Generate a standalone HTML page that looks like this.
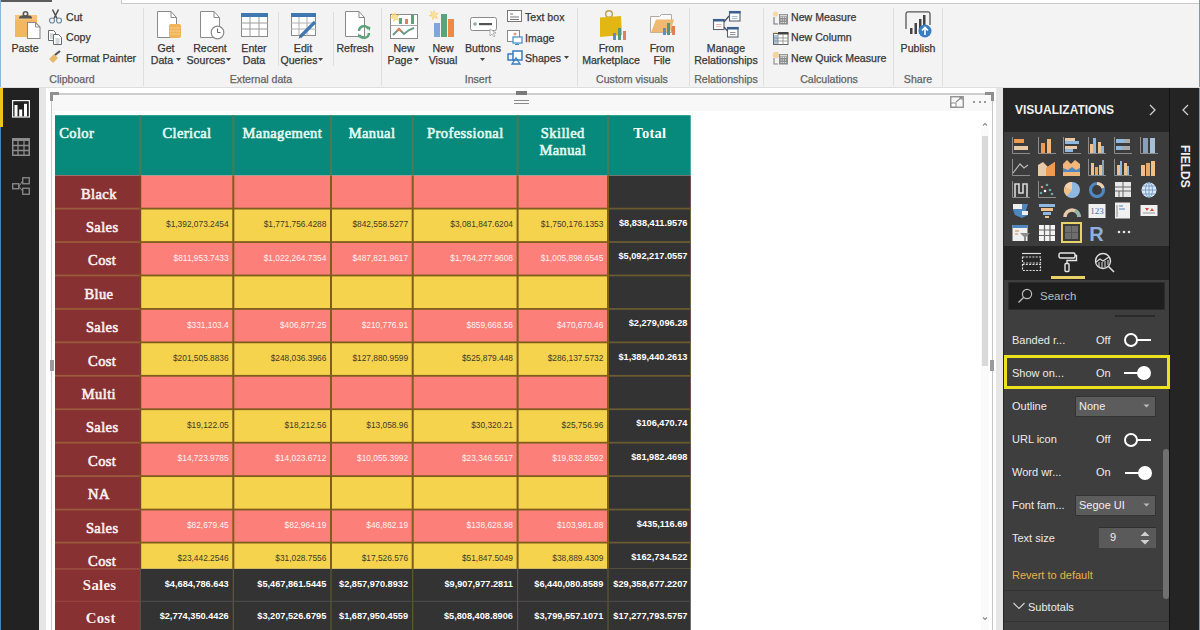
<!DOCTYPE html>
<html><head><meta charset="utf-8"><style>
*{margin:0;padding:0;box-sizing:border-box}
html,body{width:1200px;height:630px;overflow:hidden;background:#f3f3f3;font-family:"Liberation Sans", sans-serif}
.ab{position:absolute;display:block}
.t{position:absolute;white-space:nowrap;line-height:1}
</style></head><body>

<div class="ab" style="left:0px;top:0px;width:52px;height:2px;background:#5c5c5c"></div>
<div class="ab" style="left:121px;top:0px;width:1079px;height:3px;background:#ffffff"></div>
<div class="ab" style="left:121px;top:3px;width:1079px;height:1px;background:#c8c8c8"></div>
<div class="ab" style="left:121px;top:0px;width:1px;height:4px;background:#c8c8c8"></div>
<div class="ab" style="left:0px;top:0px;width:1px;height:88px;background:#86b8dc"></div>
<div class="ab" style="left:1199px;top:0px;width:1px;height:630px;background:#6f9fc2"></div>
<div class="ab" style="left:0px;top:87px;width:1200px;height:1px;background:#dedede"></div>
<div class="ab" style="left:143px;top:8px;width:1px;height:78px;background:#dedede"></div>
<div class="ab" style="left:278px;top:12px;width:1px;height:54px;background:#dedede"></div>
<div class="ab" style="left:333px;top:12px;width:1px;height:54px;background:#dedede"></div>
<div class="ab" style="left:381px;top:8px;width:1px;height:78px;background:#dedede"></div>
<div class="ab" style="left:577px;top:8px;width:1px;height:78px;background:#dedede"></div>
<div class="ab" style="left:689px;top:8px;width:1px;height:78px;background:#dedede"></div>
<div class="ab" style="left:763px;top:8px;width:1px;height:78px;background:#dedede"></div>
<div class="ab" style="left:893px;top:8px;width:1px;height:78px;background:#dedede"></div>
<div class="ab" style="left:942px;top:8px;width:1px;height:78px;background:#dedede"></div>
<svg class="ab" style="left:13px;top:9px" width="30" height="32" viewBox="0 0 30 32"><rect x="2" y="6" width="22" height="22" fill="#f2b860"/><rect x="2" y="6" width="22" height="5" fill="#f5c888" opacity="0.6"/><path d="M6 9.5 Q6 6.5 9 6.5 H16 Q19 6.5 19 9.5 Z" fill="#555"/><circle cx="12.5" cy="5" r="2.2" fill="none" stroke="#555" stroke-width="1.6"/><path d="M14.5 13.5 h8 l4.5 4.5 v11.5 h-12.5 z" fill="#fff" stroke="#8a8a8a" stroke-width="1.1"/><path d="M22.5 13.5 v4.5 h4.5" fill="none" stroke="#8a8a8a" stroke-width="1"/></svg>
<div class="t" style="left:11.45px;top:42.89px;font-family:'Liberation Sans', sans-serif;font-weight:normal;font-size:10.6px;color:#363636;-webkit-text-stroke:0.25px #363636">Paste</div>
<svg class="ab" style="left:48px;top:9px" width="15" height="15" viewBox="0 0 15 15"><path d="M4.5 0.5 L9 9.5 M10.5 0.5 L6 9.5" stroke="#4a4a4a" stroke-width="1.5"/><circle cx="4" cy="11.5" r="2.5" fill="none" stroke="#6f8aa0" stroke-width="1.2"/><circle cx="11" cy="11.5" r="2.5" fill="none" stroke="#6f8aa0" stroke-width="1.2"/></svg>
<div class="t" style="left:66.00px;top:11.89px;font-family:'Liberation Sans', sans-serif;font-weight:normal;font-size:10.6px;color:#363636;-webkit-text-stroke:0.25px #363636">Cut</div>
<svg class="ab" style="left:48px;top:30px" width="16" height="15" viewBox="0 0 16 15"><path d="M0.5 0.5 h5 l2 2 v8 h-7z" fill="#fff" stroke="#6a6a6a" stroke-width="1"/><path d="M2 4h3M2 6h3M2 8h3" stroke="#8a9aaa" stroke-width="0.8"/><path d="M5.5 4.5 h5 l3 3 v7 h-8z" fill="#fff" stroke="#6a6a6a" stroke-width="1"/><path d="M7.5 9h4M7.5 11h4M7.5 13h4" stroke="#8a9aaa" stroke-width="0.8"/></svg>
<div class="t" style="left:66.00px;top:31.89px;font-family:'Liberation Sans', sans-serif;font-weight:normal;font-size:10.6px;color:#363636;-webkit-text-stroke:0.25px #363636">Copy</div>
<svg class="ab" style="left:48px;top:50px" width="15" height="14" viewBox="0 0 15 14"><path d="M1 9 L6 4 L10 8 L5 13 Z" fill="#e8b86a"/><path d="M7 5 L12 1" stroke="#555" stroke-width="2.2"/></svg>
<div class="t" style="left:66.00px;top:52.89px;font-family:'Liberation Sans', sans-serif;font-weight:normal;font-size:10.6px;color:#363636;-webkit-text-stroke:0.25px #363636">Format Painter</div>
<div class="t" style="left:49.31px;top:73.89px;font-family:'Liberation Sans', sans-serif;font-weight:normal;font-size:10.6px;color:#646464;-webkit-text-stroke:0.25px #646464">Clipboard</div>
<svg class="ab" style="left:157px;top:11px" width="20" height="27" viewBox="0 0 20 27"><path d="M0.5 0.5 H14 L19.5 6.5 V26.5 H0.5 Z" fill="#fff" stroke="#8a8a8a" stroke-width="1"/><path d="M14 0.5 V6.5 H19.5" fill="none" stroke="#8a8a8a" stroke-width="1"/></svg>
<svg class="ab" style="left:169px;top:22px" width="13" height="17" viewBox="0 0 13 17"><rect x="0" y="2" width="12" height="14" rx="2" fill="#f0b35a"/><path d="M1 6h10M1 9h10M1 12h10" stroke="#f7d39a" stroke-width="0.8"/></svg>
<div class="t" style="left:157.46px;top:42.89px;font-family:'Liberation Sans', sans-serif;font-weight:normal;font-size:10.6px;color:#363636;-webkit-text-stroke:0.25px #363636">Get</div>
<div class="t" style="left:150.80px;top:54.89px;font-family:'Liberation Sans', sans-serif;font-weight:normal;font-size:10.6px;color:#363636;-webkit-text-stroke:0.25px #363636">Data</div>
<svg class="ab" style="left:176px;top:58px" width="6" height="4" viewBox="0 0 6 4"><path d="M0 0h5l-2.5 3z" fill="#444"/></svg>
<svg class="ab" style="left:200px;top:11px" width="20" height="27" viewBox="0 0 20 27"><path d="M0.5 0.5 H14 L19.5 6.5 V26.5 H0.5 Z" fill="#fff" stroke="#8a8a8a" stroke-width="1"/><path d="M14 0.5 V6.5 H19.5" fill="none" stroke="#8a8a8a" stroke-width="1"/></svg>
<svg class="ab" style="left:210px;top:25px" width="15" height="15" viewBox="0 0 15 15"><circle cx="7.5" cy="7.5" r="6.3" fill="#fff" stroke="#8a8a8a" stroke-width="1.2"/><path d="M7.5 3.5V7.5H10.5" fill="none" stroke="#666" stroke-width="1"/></svg>
<div class="t" style="left:193.21px;top:42.89px;font-family:'Liberation Sans', sans-serif;font-weight:normal;font-size:10.6px;color:#363636;-webkit-text-stroke:0.25px #363636">Recent</div>
<div class="t" style="left:186.56px;top:54.89px;font-family:'Liberation Sans', sans-serif;font-weight:normal;font-size:10.6px;color:#363636;-webkit-text-stroke:0.25px #363636">Sources</div>
<svg class="ab" style="left:226px;top:58px" width="6" height="4" viewBox="0 0 6 4"><path d="M0 0h5l-2.5 3z" fill="#444"/></svg>
<svg class="ab" style="left:241px;top:13px" width="27" height="24" viewBox="0 0 27 24"><rect x="0.5" y="0.5" width="26" height="23" fill="#fff" stroke="#8a8a8a"/><rect x="0" y="0" width="27" height="4" fill="#3f78b0"/><path d="M0 10h27M0 16h27M9 4v20M18 4v20" stroke="#9a9a9a" stroke-width="1"/></svg>
<div class="t" style="left:241.33px;top:42.89px;font-family:'Liberation Sans', sans-serif;font-weight:normal;font-size:10.6px;color:#363636;-webkit-text-stroke:0.25px #363636">Enter</div>
<div class="t" style="left:242.80px;top:54.89px;font-family:'Liberation Sans', sans-serif;font-weight:normal;font-size:10.6px;color:#363636;-webkit-text-stroke:0.25px #363636">Data</div>
<svg class="ab" style="left:291px;top:13px" width="27" height="26" viewBox="0 0 27 26"><rect x="0.5" y="0.5" width="24" height="22" fill="#fff" stroke="#8a8a8a"/><rect x="0" y="0" width="25" height="4" fill="#3f78b0"/><path d="M0 10h25M0 16h25M8 4v19M16 4v19" stroke="#b0b0b0" stroke-width="1"/><path d="M9 24 L24 9" stroke="#3f78b0" stroke-width="3.2"/><path d="M8 25.5 L10 22" stroke="#555" stroke-width="1"/></svg>
<div class="t" style="left:293.87px;top:42.89px;font-family:'Liberation Sans', sans-serif;font-weight:normal;font-size:10.6px;color:#363636;-webkit-text-stroke:0.25px #363636">Edit</div>
<div class="t" style="left:280.44px;top:54.89px;font-family:'Liberation Sans', sans-serif;font-weight:normal;font-size:10.6px;color:#363636;-webkit-text-stroke:0.25px #363636">Queries</div>
<svg class="ab" style="left:318px;top:58px" width="6" height="4" viewBox="0 0 6 4"><path d="M0 0h5l-2.5 3z" fill="#444"/></svg>
<svg class="ab" style="left:345px;top:11px" width="20" height="26" viewBox="0 0 20 26"><path d="M0.5 0.5 H14 L19.5 6.5 V25.5 H0.5 Z" fill="#fff" stroke="#8a8a8a" stroke-width="1"/><path d="M14 0.5 V6.5 H19.5" fill="none" stroke="#8a8a8a" stroke-width="1"/></svg>
<svg class="ab" style="left:356px;top:24px" width="16" height="16" viewBox="0 0 16 16"><path d="M3 7 A5 5 0 0 1 12.5 5" fill="none" stroke="#5aa37a" stroke-width="2.4"/><path d="M13 9 A5 5 0 0 1 3.5 11" fill="none" stroke="#5aa37a" stroke-width="2.4"/><path d="M10.5 2l4 1-1 4z M5.5 14l-4-1 1-4z" fill="#5aa37a"/></svg>
<div class="t" style="left:336.44px;top:42.89px;font-family:'Liberation Sans', sans-serif;font-weight:normal;font-size:10.6px;color:#363636;-webkit-text-stroke:0.25px #363636">Refresh</div>
<div class="t" style="left:229.77px;top:73.89px;font-family:'Liberation Sans', sans-serif;font-weight:normal;font-size:10.6px;color:#646464;-webkit-text-stroke:0.25px #646464">External data</div>
<svg class="ab" style="left:389px;top:11px" width="30" height="28" viewBox="0 0 30 28"><rect x="1.5" y="3.5" width="27" height="24" fill="#fff" stroke="#8a8a8a"/><path d="M1.5 14.5h27" stroke="#aaa"/><rect x="10" y="7" width="3" height="6" fill="#5aa37a"/><rect x="16" y="8" width="3" height="5" fill="#e0805a"/><rect x="22" y="4" width="3" height="9" fill="#5aa37a"/><path d="M4 24 L10 18 L15 23 L20 19 L25 17" fill="none" stroke="#6a9a8a" stroke-width="2"/><path d="M8 20 L10 18 L12 20" stroke="#e0805a" stroke-width="2" fill="none"/><g transform="translate(6,6)"><path d="M0 -5.5 L1.2 -1.5 L5 -2.5 L2 0.5 L4.5 4 L0.5 2.5 L-1.5 5.5 L-1.8 1.5 L-5.5 1 L-2.5 -1 L-4 -4.5 L-0.8 -2z" fill="#f6cf6a"/><circle r="2.6" fill="#fbe09a"/></g></svg>
<div class="t" style="left:393.40px;top:42.89px;font-family:'Liberation Sans', sans-serif;font-weight:normal;font-size:10.6px;color:#363636;-webkit-text-stroke:0.25px #363636">New</div>
<div class="t" style="left:387.62px;top:54.89px;font-family:'Liberation Sans', sans-serif;font-weight:normal;font-size:10.6px;color:#363636;-webkit-text-stroke:0.25px #363636">Page</div>
<svg class="ab" style="left:414px;top:58px" width="6" height="4" viewBox="0 0 6 4"><path d="M0 0h5l-2.5 3z" fill="#444"/></svg>
<svg class="ab" style="left:428px;top:9px" width="28" height="29" viewBox="0 0 28 29"><g transform="translate(6,6)"><path d="M0 -5.5 L1.2 -1.5 L5 -2.5 L2 0.5 L4.5 4 L0.5 2.5 L-1.5 5.5 L-1.8 1.5 L-5.5 1 L-2.5 -1 L-4 -4.5 L-0.8 -2z" fill="#f6cf6a"/><circle r="2.6" fill="#fbe09a"/></g><rect x="6" y="14" width="6" height="14" fill="#7da7d9"/><rect x="13" y="5" width="6" height="23" fill="#5aa37a"/><rect x="20" y="10" width="6" height="18" fill="#ef8a45"/></svg>
<div class="t" style="left:432.40px;top:42.89px;font-family:'Liberation Sans', sans-serif;font-weight:normal;font-size:10.6px;color:#363636;-webkit-text-stroke:0.25px #363636">New</div>
<div class="t" style="left:428.66px;top:54.89px;font-family:'Liberation Sans', sans-serif;font-weight:normal;font-size:10.6px;color:#363636;-webkit-text-stroke:0.25px #363636">Visual</div>
<svg class="ab" style="left:470px;top:17px" width="29" height="20" viewBox="0 0 29 20"><rect x="0.5" y="0.5" width="26" height="13" rx="2" fill="#fff" stroke="#8a8a8a"/><circle cx="5" cy="7" r="1.8" fill="#8aa"/><rect x="9" y="6" width="13" height="2.2" fill="#555"/><path d="M20 12 l0 7 l2-2 l2 3 l1-1 l-2-3 h3z" fill="#fff" stroke="#999" stroke-width="0.7"/></svg>
<div class="t" style="left:465.03px;top:42.89px;font-family:'Liberation Sans', sans-serif;font-weight:normal;font-size:10.6px;color:#363636;-webkit-text-stroke:0.25px #363636">Buttons</div>
<svg class="ab" style="left:480px;top:58px" width="6" height="4" viewBox="0 0 6 4"><path d="M0 0h5l-2.5 3z" fill="#444"/></svg>
<svg class="ab" style="left:507px;top:10px" width="16" height="13" viewBox="0 0 16 13"><rect x="0.5" y="0.5" width="14" height="11" fill="#fff" stroke="#777"/><path d="M3 4h3M3 7h9M3 9.5h9" stroke="#777" stroke-width="1"/></svg>
<div class="t" style="left:525.00px;top:11.89px;font-family:'Liberation Sans', sans-serif;font-weight:normal;font-size:10.6px;color:#363636;-webkit-text-stroke:0.25px #363636">Text box</div>
<svg class="ab" style="left:507px;top:30px" width="16" height="15" viewBox="0 0 16 15"><rect x="0.5" y="0.5" width="12" height="11" fill="#fff" stroke="#8a8a8a"/><circle cx="8" cy="4" r="1.5" fill="#e59a7a"/><rect x="6" y="7" width="9" height="6" fill="#fff" stroke="#3a8fc0" stroke-width="1.2"/><path d="M10 13v2M8 14.5h4" stroke="#3a8fc0"/></svg>
<div class="t" style="left:525.00px;top:32.89px;font-family:'Liberation Sans', sans-serif;font-weight:normal;font-size:10.6px;color:#363636;-webkit-text-stroke:0.25px #363636">Image</div>
<svg class="ab" style="left:507px;top:50px" width="16" height="15" viewBox="0 0 16 15"><path d="M1 4 h6 v6 h-6z" fill="none" stroke="#3a7ec0" stroke-width="1.5"/><path d="M6 1 h9 v9 h-9z" fill="#fff" stroke="#3a7ec0" stroke-width="1.5"/><path d="M5 14 L9 8 L13 14z" fill="none" stroke="#3a7ec0" stroke-width="1.3"/></svg>
<div class="t" style="left:525.00px;top:52.89px;font-family:'Liberation Sans', sans-serif;font-weight:normal;font-size:10.6px;color:#363636;-webkit-text-stroke:0.25px #363636">Shapes</div>
<svg class="ab" style="left:564px;top:56px" width="6" height="4" viewBox="0 0 6 4"><path d="M0 0h5l-2.5 3z" fill="#444"/></svg>
<div class="t" style="left:464.74px;top:73.89px;font-family:'Liberation Sans', sans-serif;font-weight:normal;font-size:10.6px;color:#646464;-webkit-text-stroke:0.25px #646464">Insert</div>
<svg class="ab" style="left:598px;top:9px" width="30" height="31" viewBox="0 0 30 31"><circle cx="11" cy="5" r="3.3" fill="none" stroke="#b8a050" stroke-width="1.4"/><path d="M2 8.5 L23 7 L24 26 L2 28z" fill="#e3b713"/><rect x="15" y="24" width="3" height="7" fill="#5a8fc0"/><rect x="20" y="19" width="3" height="12" fill="#4f9a7a"/><rect x="25" y="22" width="3" height="9" fill="#e0805a"/></svg>
<div class="t" style="left:598.64px;top:42.89px;font-family:'Liberation Sans', sans-serif;font-weight:normal;font-size:10.6px;color:#363636;-webkit-text-stroke:0.25px #363636">From</div>
<div class="t" style="left:582.13px;top:54.89px;font-family:'Liberation Sans', sans-serif;font-weight:normal;font-size:10.6px;color:#363636;-webkit-text-stroke:0.25px #363636">Marketplace</div>
<svg class="ab" style="left:649px;top:13px" width="28" height="23" viewBox="0 0 28 23"><path d="M1.5 3.5 h9 l2 -2 h10 v18 h-21z" fill="#fbfbfb" stroke="#b0a8a0" stroke-width="1"/><path d="M2 19.5 L7 6.5 H25 L21 19.5z" fill="#f0b870"/><rect x="14" y="15" width="3" height="7" fill="#5a8fc0"/><rect x="18" y="10" width="3" height="12" fill="#4f9a7a"/><rect x="23" y="13" width="3" height="9" fill="#e0805a"/></svg>
<div class="t" style="left:649.64px;top:42.89px;font-family:'Liberation Sans', sans-serif;font-weight:normal;font-size:10.6px;color:#363636;-webkit-text-stroke:0.25px #363636">From</div>
<div class="t" style="left:653.46px;top:54.89px;font-family:'Liberation Sans', sans-serif;font-weight:normal;font-size:10.6px;color:#363636;-webkit-text-stroke:0.25px #363636">File</div>
<div class="t" style="left:596.07px;top:73.89px;font-family:'Liberation Sans', sans-serif;font-weight:normal;font-size:10.6px;color:#646464;-webkit-text-stroke:0.25px #646464">Custom visuals</div>
<svg class="ab" style="left:712px;top:10px" width="30" height="29" viewBox="0 0 30 29"><rect x="1.5" y="9.5" width="10.5" height="10" fill="#fff" stroke="#5a6270" stroke-width="1.1"/><rect x="1" y="9" width="11.5" height="2.5" fill="#3d5f8f"/><path d="M4 14.5h5.5M4 16.5h5.5" stroke="#d9a090" stroke-width="0.8"/><rect x="17.5" y="1.5" width="10.5" height="9.5" fill="#fff" stroke="#5a6270" stroke-width="1.1"/><rect x="17" y="1" width="11.5" height="2.5" fill="#3d5f8f"/><path d="M20 6.5h5.5M20 8.5h5.5" stroke="#8aa8c8" stroke-width="0.8"/><rect x="15.5" y="17.5" width="10.5" height="9.5" fill="#fff" stroke="#5a6270" stroke-width="1.1"/><rect x="15" y="17" width="11.5" height="2.5" fill="#3d5f8f"/><path d="M18 22.5h5.5M18 24.5h5.5" stroke="#777" stroke-width="0.8"/><path d="M12 12 L17 6 M12 17 L15.5 21" stroke="#4a5260" stroke-width="1.3"/></svg>
<div class="t" style="left:706.85px;top:42.89px;font-family:'Liberation Sans', sans-serif;font-weight:normal;font-size:10.6px;color:#363636;-webkit-text-stroke:0.25px #363636">Manage</div>
<div class="t" style="left:694.18px;top:54.89px;font-family:'Liberation Sans', sans-serif;font-weight:normal;font-size:10.6px;color:#363636;-webkit-text-stroke:0.25px #363636">Relationships</div>
<div class="t" style="left:694.18px;top:73.89px;font-family:'Liberation Sans', sans-serif;font-weight:normal;font-size:10.6px;color:#646464;-webkit-text-stroke:0.25px #646464">Relationships</div>
<svg class="ab" style="left:772px;top:11px" width="18" height="14" viewBox="0 0 18 14"><circle cx="3.5" cy="3" r="2.6" fill="#f5d9a8"/><path d="M2 6v7h4" fill="none" stroke="#777" stroke-width="1.1"/><rect x="7" y="3" width="9" height="10.5" fill="#8c8c8c"/><path d="M8.5 6.5h6M8.5 9h6M8.5 11.5h6" stroke="#e8e8e8" stroke-width="1" stroke-dasharray="1.3 0.9"/><rect x="8" y="3.8" width="7" height="1.6" fill="#d8d8d8"/></svg>
<div class="t" style="left:791.00px;top:11.89px;font-family:'Liberation Sans', sans-serif;font-weight:normal;font-size:10.6px;color:#363636;-webkit-text-stroke:0.25px #363636">New Measure</div>
<svg class="ab" style="left:772px;top:31px" width="18" height="14" viewBox="0 0 18 14"><circle cx="3.5" cy="3" r="2.6" fill="#f5d9a8"/><rect x="1.5" y="2.5" width="14.5" height="11" fill="#fff" stroke="#666" stroke-width="1"/><rect x="6" y="1" width="10.5" height="2.5" fill="#444"/><rect x="2" y="4" width="4" height="9" fill="#a9c9e3"/><path d="M1.5 7h14.5M1.5 10h14.5M6 3v10.5M11 3v10.5" stroke="#888" stroke-width="0.8"/></svg>
<div class="t" style="left:791.00px;top:31.89px;font-family:'Liberation Sans', sans-serif;font-weight:normal;font-size:10.6px;color:#363636;-webkit-text-stroke:0.25px #363636">New Column</div>
<svg class="ab" style="left:772px;top:51px" width="18" height="14" viewBox="0 0 18 14"><circle cx="4" cy="4" r="3.2" fill="#f3d3a0"/><path d="M2 7v6h4" fill="none" stroke="#888" stroke-width="1.1"/><rect x="7" y="3" width="9" height="10.5" fill="#8c8c8c"/><path d="M8.5 6.5h6M8.5 9h6M8.5 11.5h6" stroke="#e8e8e8" stroke-width="1" stroke-dasharray="1.3 0.9"/><rect x="8" y="3.8" width="7" height="1.6" fill="#d8d8d8"/></svg>
<div class="t" style="left:791.00px;top:52.89px;font-family:'Liberation Sans', sans-serif;font-weight:normal;font-size:10.6px;color:#363636;-webkit-text-stroke:0.25px #363636">New Quick Measure</div>
<div class="t" style="left:800.13px;top:73.89px;font-family:'Liberation Sans', sans-serif;font-weight:normal;font-size:10.6px;color:#646464;-webkit-text-stroke:0.25px #646464">Calculations</div>
<svg class="ab" style="left:902px;top:11px" width="32" height="29" viewBox="0 0 32 29"><path d="M4 18 V2.5 A2 2 0 0 1 6 0.8 H26 A2 2 0 0 1 28 2.5 V14" fill="none" stroke="#555" stroke-width="1.3"/><rect x="8" y="17" width="2.5" height="6" fill="#444"/><rect x="12.5" y="12" width="2.5" height="11" fill="#444"/><rect x="17" y="8" width="2.5" height="15" fill="#444"/><rect x="21" y="4" width="2.5" height="12" fill="#444"/><circle cx="23" cy="20" r="6.5" fill="#3a7ec0"/><path d="M23 24V16.5M20 19.5L23 16.5L26 19.5" fill="none" stroke="#fff" stroke-width="1.6"/></svg>
<div class="t" style="left:900.62px;top:42.89px;font-family:'Liberation Sans', sans-serif;font-weight:normal;font-size:10.6px;color:#363636;-webkit-text-stroke:0.25px #363636">Publish</div>
<div class="t" style="left:903.86px;top:73.89px;font-family:'Liberation Sans', sans-serif;font-weight:normal;font-size:10.6px;color:#646464;-webkit-text-stroke:0.25px #646464">Share</div>
<div class="ab" style="left:0px;top:88px;width:39px;height:542px;background:#222222"></div>
<div class="ab" style="left:0px;top:88px;width:3px;height:39px;background:#e9c71a"></div>
<div class="ab" style="left:0px;top:127px;width:1px;height:503px;background:#3f86b8"></div>
<svg class="ab" style="left:12px;top:100px" width="18" height="18" viewBox="0 0 18 18"><rect x="0.6" y="0.6" width="16.8" height="16.4" fill="none" stroke="#f4f4f4" stroke-width="1.2"/><rect x="2.5" y="5" width="3" height="11.5" fill="#fff"/><rect x="7.2" y="9.5" width="3" height="7" fill="#fff"/><rect x="12" y="3.8" width="3" height="12.7" fill="#fff"/></svg>
<svg class="ab" style="left:12px;top:138px" width="18" height="18" viewBox="0 0 18 18"><rect x="0.75" y="0.75" width="16.5" height="16.5" fill="none" stroke="#8c8c8c" stroke-width="1.5"/><rect x="0" y="0" width="18" height="3" fill="#8c8c8c"/><path d="M0 7.5h18M0 12.5h18M6 3v15M12 3v15" stroke="#8c8c8c" stroke-width="1.3"/></svg>
<svg class="ab" style="left:12px;top:177px" width="18" height="18" viewBox="0 0 18 18"><rect x="0.75" y="6.75" width="6" height="5" fill="none" stroke="#8c8c8c" stroke-width="1.3"/><rect x="10.75" y="0.75" width="6.5" height="6" fill="none" stroke="#8c8c8c" stroke-width="1.3"/><rect x="10.75" y="11.25" width="6.5" height="6" fill="none" stroke="#8c8c8c" stroke-width="1.3"/><path d="M7 9.5 L10.5 4 M7 9.5 L10.5 14" stroke="#8c8c8c" stroke-width="1"/></svg>
<div class="ab" style="left:39px;top:88px;width:964px;height:542px;background:#e6e6e6"></div>
<div class="ab" style="left:46px;top:88px;width:950px;height:542px;background:#ffffff"></div>
<div class="ab" style="left:52px;top:95px;width:940px;height:16px;background:#f8f8f8"></div>
<div class="ab" style="left:51px;top:93px;width:942px;height:2px;background:#cdcdcd"></div>
<div class="ab" style="left:51px;top:93px;width:1px;height:537px;background:#c6c6c6"></div>
<div class="ab" style="left:992px;top:93px;width:1px;height:537px;background:#c6c6c6"></div>
<div class="ab" style="left:50px;top:92px;width:9px;height:3px;background:#8f8f8f"></div>
<div class="ab" style="left:50px;top:92px;width:3px;height:9px;background:#8f8f8f"></div>
<div class="ab" style="left:985px;top:92px;width:9px;height:3px;background:#8f8f8f"></div>
<div class="ab" style="left:991px;top:92px;width:3px;height:9px;background:#8f8f8f"></div>
<div class="ab" style="left:50px;top:360px;width:4px;height:11px;background:#9a9a9a"></div>
<div class="ab" style="left:990px;top:360px;width:4px;height:11px;background:#9a9a9a"></div>
<div class="ab" style="left:516px;top:91px;width:11px;height:4px;background:#7a7a7a"></div>
<div class="ab" style="left:514px;top:100px;width:15px;height:1px;background:#8a8a8a"></div>
<div class="ab" style="left:514px;top:103px;width:15px;height:1px;background:#8a8a8a"></div>
<svg class="ab" style="left:950px;top:96px" width="14" height="12" viewBox="0 0 14 12"><rect x="0.75" y="0.75" width="12.5" height="10.5" fill="none" stroke="#8a8a8a" stroke-width="1.3"/><rect x="1" y="7" width="5" height="4" fill="#fff" stroke="#8a8a8a" stroke-width="1"/><path d="M6 6 L12 1 M9 1h3v3" fill="none" stroke="#8a8a8a" stroke-width="1.2"/></svg>
<div class="ab" style="left:973px;top:101px;width:2px;height:2px;background:#7a7a7a;border-radius:1px"></div>
<div class="ab" style="left:979px;top:101px;width:2px;height:2px;background:#7a7a7a;border-radius:1px"></div>
<div class="ab" style="left:984px;top:101px;width:2px;height:2px;background:#7a7a7a;border-radius:1px"></div>
<div class="ab" style="left:981px;top:128px;width:8px;height:502px;background:#fafafa"></div>
<svg class="ab" style="left:981px;top:121px" width="8" height="6" viewBox="0 0 8 6"><path d="M2 4.5 L4 2.5 L6 4.5" fill="none" stroke="#8a8a8a" stroke-width="1.1"/></svg>
<div class="ab" style="left:982px;top:136px;width:6px;height:230px;background:#d9d9d9"></div>
<svg class="ab" style="left:981px;top:616px" width="8" height="6" viewBox="0 0 8 6"><path d="M2 1.5 L4 3.5 L6 1.5" fill="none" stroke="#8a8a8a" stroke-width="1.1"/></svg>
<svg class="ab" style="left:55px;top:115px" width="636" height="515" viewBox="0 0 636 515"><rect x="0.00" y="0.20" width="635.70" height="60.40" fill="#078a7b"/><rect x="84.20" y="0.20" width="2.00" height="60.40" fill="#4a7a5a"/><rect x="177.30" y="0.20" width="2.00" height="60.40" fill="#4a7a5a"/><rect x="275.00" y="0.20" width="2.00" height="60.40" fill="#4a7a5a"/><rect x="356.70" y="0.20" width="2.00" height="60.40" fill="#4a7a5a"/><rect x="461.60" y="0.20" width="2.00" height="60.40" fill="#4a7a5a"/><rect x="552.00" y="0.20" width="2.00" height="60.40" fill="#4a7a5a"/><rect x="0.00" y="60.60" width="635.70" height="33.00" fill="#fd7f79"/><rect x="0.00" y="93.60" width="635.70" height="33.44" fill="#f6d34c"/><rect x="0.00" y="127.04" width="635.70" height="33.44" fill="#fd7f79"/><rect x="0.00" y="160.48" width="635.70" height="33.44" fill="#f6d34c"/><rect x="0.00" y="193.92" width="635.70" height="33.44" fill="#fd7f79"/><rect x="0.00" y="227.36" width="635.70" height="33.44" fill="#f6d34c"/><rect x="0.00" y="260.80" width="635.70" height="33.44" fill="#fd7f79"/><rect x="0.00" y="294.24" width="635.70" height="33.44" fill="#f6d34c"/><rect x="0.00" y="327.68" width="635.70" height="33.44" fill="#fd7f79"/><rect x="0.00" y="361.12" width="635.70" height="33.44" fill="#f6d34c"/><rect x="0.00" y="394.56" width="635.70" height="33.04" fill="#fd7f79"/><rect x="0.00" y="427.60" width="635.70" height="26.20" fill="#f6d34c"/><rect x="0.00" y="60.60" width="85.20" height="393.20" fill="#873133"/><rect x="553.00" y="60.60" width="82.70" height="393.20" fill="#333333"/><rect x="177.30" y="60.60" width="2.00" height="393.20" fill="#7f5d1d"/><rect x="275.00" y="60.60" width="2.00" height="393.20" fill="#7f5d1d"/><rect x="356.70" y="60.60" width="2.00" height="393.20" fill="#7f5d1d"/><rect x="461.60" y="60.60" width="2.00" height="393.20" fill="#7f5d1d"/><rect x="552.00" y="60.60" width="2.00" height="393.20" fill="#7f5d1d"/><rect x="84.20" y="60.60" width="2.00" height="393.20" fill="#7a4422"/><rect x="0.00" y="92.70" width="84.20" height="1.80" fill="#9b5a3c"/><rect x="84.20" y="92.70" width="469.80" height="1.80" fill="#7f5d1d"/><rect x="554.00" y="92.70" width="81.70" height="1.80" fill="#6a5a30"/><rect x="0.00" y="126.14" width="84.20" height="1.80" fill="#9b5a3c"/><rect x="84.20" y="126.14" width="469.80" height="1.80" fill="#7f5d1d"/><rect x="554.00" y="126.14" width="81.70" height="1.80" fill="#6a5a30"/><rect x="0.00" y="159.58" width="84.20" height="1.80" fill="#9b5a3c"/><rect x="84.20" y="159.58" width="469.80" height="1.80" fill="#7f5d1d"/><rect x="554.00" y="159.58" width="81.70" height="1.80" fill="#6a5a30"/><rect x="0.00" y="193.02" width="84.20" height="1.80" fill="#9b5a3c"/><rect x="84.20" y="193.02" width="469.80" height="1.80" fill="#7f5d1d"/><rect x="554.00" y="193.02" width="81.70" height="1.80" fill="#6a5a30"/><rect x="0.00" y="226.46" width="84.20" height="1.80" fill="#9b5a3c"/><rect x="84.20" y="226.46" width="469.80" height="1.80" fill="#7f5d1d"/><rect x="554.00" y="226.46" width="81.70" height="1.80" fill="#6a5a30"/><rect x="0.00" y="259.90" width="84.20" height="1.80" fill="#9b5a3c"/><rect x="84.20" y="259.90" width="469.80" height="1.80" fill="#7f5d1d"/><rect x="554.00" y="259.90" width="81.70" height="1.80" fill="#6a5a30"/><rect x="0.00" y="293.34" width="84.20" height="1.80" fill="#9b5a3c"/><rect x="84.20" y="293.34" width="469.80" height="1.80" fill="#7f5d1d"/><rect x="554.00" y="293.34" width="81.70" height="1.80" fill="#6a5a30"/><rect x="0.00" y="326.78" width="84.20" height="1.80" fill="#9b5a3c"/><rect x="84.20" y="326.78" width="469.80" height="1.80" fill="#7f5d1d"/><rect x="554.00" y="326.78" width="81.70" height="1.80" fill="#6a5a30"/><rect x="0.00" y="360.22" width="84.20" height="1.80" fill="#9b5a3c"/><rect x="84.20" y="360.22" width="469.80" height="1.80" fill="#7f5d1d"/><rect x="554.00" y="360.22" width="81.70" height="1.80" fill="#6a5a30"/><rect x="0.00" y="393.66" width="84.20" height="1.80" fill="#9b5a3c"/><rect x="84.20" y="393.66" width="469.80" height="1.80" fill="#7f5d1d"/><rect x="554.00" y="393.66" width="81.70" height="1.80" fill="#6a5a30"/><rect x="0.00" y="426.70" width="84.20" height="1.80" fill="#9b5a3c"/><rect x="84.20" y="426.70" width="469.80" height="1.80" fill="#7f5d1d"/><rect x="554.00" y="426.70" width="81.70" height="1.80" fill="#6a5a30"/><rect x="0.00" y="453.80" width="85.20" height="61.20" fill="#873133"/><rect x="85.20" y="453.80" width="550.50" height="61.20" fill="#333333"/><rect x="0.00" y="453.80" width="85.20" height="1.00" fill="#9a4a40"/><rect x="0.00" y="485.80" width="85.20" height="1.00" fill="#9a4a40"/><rect x="84.70" y="453.80" width="1.20" height="61.20" fill="#5a5048"/><rect x="177.70" y="453.80" width="1.20" height="61.20" fill="#5c5a2e"/><rect x="275.40" y="453.80" width="1.20" height="61.20" fill="#5c5a2e"/><rect x="357.10" y="453.80" width="1.20" height="61.20" fill="#5c5a2e"/><rect x="462.00" y="453.80" width="1.20" height="61.20" fill="#5c5a2e"/><rect x="552.40" y="453.80" width="1.20" height="61.20" fill="#5c5a2e"/><rect x="85.20" y="485.80" width="550.50" height="1.00" fill="#4f4f4f"/></svg>
<div class="t" style="left:59.20px;top:125.95px;font-family:'Liberation Serif', serif;font-weight:normal;font-size:14.5px;color:#e3faf2;letter-spacing:0.4px;-webkit-text-stroke:0.6px #e3faf2">Color</div>
<div class="t" style="left:162.40px;top:125.95px;font-family:'Liberation Serif', serif;font-weight:normal;font-size:14.5px;color:#e3faf2;letter-spacing:0.4px;-webkit-text-stroke:0.6px #e3faf2">Clerical</div>
<div class="t" style="left:242.50px;top:125.95px;font-family:'Liberation Serif', serif;font-weight:normal;font-size:14.5px;color:#e3faf2;letter-spacing:0.4px;-webkit-text-stroke:0.6px #e3faf2">Management</div>
<div class="t" style="left:348.70px;top:125.95px;font-family:'Liberation Serif', serif;font-weight:normal;font-size:14.5px;color:#e3faf2;letter-spacing:0.4px;-webkit-text-stroke:0.6px #e3faf2">Manual</div>
<div class="t" style="left:427.11px;top:125.95px;font-family:'Liberation Serif', serif;font-weight:normal;font-size:14.5px;color:#e3faf2;letter-spacing:0.4px;-webkit-text-stroke:0.6px #e3faf2">Professional</div>
<div class="t" style="left:540.86px;top:125.95px;font-family:'Liberation Serif', serif;font-weight:normal;font-size:14.5px;color:#e3faf2;letter-spacing:0.4px;-webkit-text-stroke:0.6px #e3faf2">Skilled</div>
<div class="t" style="left:539.45px;top:143.45px;font-family:'Liberation Serif', serif;font-weight:normal;font-size:14.5px;color:#e3faf2;letter-spacing:0.4px;-webkit-text-stroke:0.6px #e3faf2">Manual</div>
<div class="t" style="left:633.25px;top:125.95px;font-family:'Liberation Serif', serif;font-weight:bold;font-size:14.5px;color:#ffffff;letter-spacing:0.3px">Total</div>
<div class="t" style="left:80.99px;top:186.55px;font-family:'Liberation Serif', serif;font-weight:normal;font-size:14.5px;color:#fbefef;letter-spacing:0.4px;-webkit-text-stroke:0.6px #fbefef">Black</div>
<div class="t" style="left:85.90px;top:219.77px;font-family:'Liberation Serif', serif;font-weight:normal;font-size:14.5px;color:#fbefef;letter-spacing:0.4px;-webkit-text-stroke:0.6px #fbefef">Sales</div>
<div class="t" style="left:166.02px;top:220.40px;font-family:'Liberation Sans', sans-serif;font-weight:normal;font-size:8.35px;color:#3e3a28">$1,392,073.2454</div>
<div class="t" style="left:263.72px;top:220.40px;font-family:'Liberation Sans', sans-serif;font-weight:normal;font-size:8.35px;color:#3e3a28">$1,771,756.4288</div>
<div class="t" style="left:352.38px;top:220.40px;font-family:'Liberation Sans', sans-serif;font-weight:normal;font-size:8.35px;color:#3e3a28">$842,558.5277</div>
<div class="t" style="left:450.32px;top:220.40px;font-family:'Liberation Sans', sans-serif;font-weight:normal;font-size:8.35px;color:#3e3a28">$3,081,847.6204</div>
<div class="t" style="left:540.72px;top:220.40px;font-family:'Liberation Sans', sans-serif;font-weight:normal;font-size:8.35px;color:#3e3a28">$1,750,176.1353</div>
<div class="t" style="left:618.94px;top:218.79px;font-family:'Liberation Sans', sans-serif;font-weight:bold;font-size:9.2px;color:#ffffff">$8,838,411.9576</div>
<div class="t" style="left:88.10px;top:253.21px;font-family:'Liberation Serif', serif;font-weight:normal;font-size:14.5px;color:#fbefef;letter-spacing:0.4px;-webkit-text-stroke:0.6px #fbefef">Cost</div>
<div class="t" style="left:173.60px;top:253.84px;font-family:'Liberation Sans', sans-serif;font-weight:normal;font-size:8.35px;color:#fff3f1">$811,953.7433</div>
<div class="t" style="left:263.72px;top:253.84px;font-family:'Liberation Sans', sans-serif;font-weight:normal;font-size:8.35px;color:#fff3f1">$1,022,264.7354</div>
<div class="t" style="left:352.38px;top:253.84px;font-family:'Liberation Sans', sans-serif;font-weight:normal;font-size:8.35px;color:#fff3f1">$487,821.9617</div>
<div class="t" style="left:450.32px;top:253.84px;font-family:'Liberation Sans', sans-serif;font-weight:normal;font-size:8.35px;color:#fff3f1">$1,764,277.9608</div>
<div class="t" style="left:540.72px;top:253.84px;font-family:'Liberation Sans', sans-serif;font-weight:normal;font-size:8.35px;color:#fff3f1">$1,005,898.6545</div>
<div class="t" style="left:618.43px;top:252.23px;font-family:'Liberation Sans', sans-serif;font-weight:bold;font-size:9.2px;color:#ffffff">$5,092,217.0557</div>
<div class="t" style="left:84.41px;top:286.65px;font-family:'Liberation Serif', serif;font-weight:normal;font-size:14.5px;color:#fbefef;letter-spacing:0.4px;-webkit-text-stroke:0.6px #fbefef">Blue</div>
<div class="t" style="left:85.90px;top:320.09px;font-family:'Liberation Serif', serif;font-weight:normal;font-size:14.5px;color:#fbefef;letter-spacing:0.4px;-webkit-text-stroke:0.6px #fbefef">Sales</div>
<div class="t" style="left:186.91px;top:320.72px;font-family:'Liberation Sans', sans-serif;font-weight:normal;font-size:8.35px;color:#fff3f1">$331,103.4</div>
<div class="t" style="left:279.97px;top:320.72px;font-family:'Liberation Sans', sans-serif;font-weight:normal;font-size:8.35px;color:#fff3f1">$406,877.25</div>
<div class="t" style="left:361.67px;top:320.72px;font-family:'Liberation Sans', sans-serif;font-weight:normal;font-size:8.35px;color:#fff3f1">$210,776.91</div>
<div class="t" style="left:466.57px;top:320.72px;font-family:'Liberation Sans', sans-serif;font-weight:normal;font-size:8.35px;color:#fff3f1">$859,668.56</div>
<div class="t" style="left:556.97px;top:320.72px;font-family:'Liberation Sans', sans-serif;font-weight:normal;font-size:8.35px;color:#fff3f1">$470,670.46</div>
<div class="t" style="left:628.67px;top:319.11px;font-family:'Liberation Sans', sans-serif;font-weight:bold;font-size:9.2px;color:#ffffff">$2,279,096.28</div>
<div class="t" style="left:88.10px;top:353.53px;font-family:'Liberation Serif', serif;font-weight:normal;font-size:14.5px;color:#fbefef;letter-spacing:0.4px;-webkit-text-stroke:0.6px #fbefef">Cost</div>
<div class="t" style="left:172.98px;top:354.16px;font-family:'Liberation Sans', sans-serif;font-weight:normal;font-size:8.35px;color:#3e3a28">$201,505.8836</div>
<div class="t" style="left:270.68px;top:354.16px;font-family:'Liberation Sans', sans-serif;font-weight:normal;font-size:8.35px;color:#3e3a28">$248,036.3966</div>
<div class="t" style="left:352.38px;top:354.16px;font-family:'Liberation Sans', sans-serif;font-weight:normal;font-size:8.35px;color:#3e3a28">$127,880.9599</div>
<div class="t" style="left:461.92px;top:354.16px;font-family:'Liberation Sans', sans-serif;font-weight:normal;font-size:8.35px;color:#3e3a28">$525,879.448</div>
<div class="t" style="left:547.68px;top:354.16px;font-family:'Liberation Sans', sans-serif;font-weight:normal;font-size:8.35px;color:#3e3a28">$286,137.5732</div>
<div class="t" style="left:618.43px;top:352.55px;font-family:'Liberation Sans', sans-serif;font-weight:bold;font-size:9.2px;color:#ffffff">$1,389,440.2613</div>
<div class="t" style="left:81.79px;top:386.97px;font-family:'Liberation Serif', serif;font-weight:normal;font-size:14.5px;color:#fbefef;letter-spacing:0.4px;-webkit-text-stroke:0.6px #fbefef">Multi</div>
<div class="t" style="left:85.90px;top:420.41px;font-family:'Liberation Serif', serif;font-weight:normal;font-size:14.5px;color:#fbefef;letter-spacing:0.4px;-webkit-text-stroke:0.6px #fbefef">Sales</div>
<div class="t" style="left:186.91px;top:421.04px;font-family:'Liberation Sans', sans-serif;font-weight:normal;font-size:8.35px;color:#3e3a28">$19,122.05</div>
<div class="t" style="left:284.61px;top:421.04px;font-family:'Liberation Sans', sans-serif;font-weight:normal;font-size:8.35px;color:#3e3a28">$18,212.56</div>
<div class="t" style="left:366.31px;top:421.04px;font-family:'Liberation Sans', sans-serif;font-weight:normal;font-size:8.35px;color:#3e3a28">$13,058.96</div>
<div class="t" style="left:471.21px;top:421.04px;font-family:'Liberation Sans', sans-serif;font-weight:normal;font-size:8.35px;color:#3e3a28">$30,320.21</div>
<div class="t" style="left:561.61px;top:421.04px;font-family:'Liberation Sans', sans-serif;font-weight:normal;font-size:8.35px;color:#3e3a28">$25,756.96</div>
<div class="t" style="left:636.34px;top:419.43px;font-family:'Liberation Sans', sans-serif;font-weight:bold;font-size:9.2px;color:#ffffff">$106,470.74</div>
<div class="t" style="left:88.10px;top:453.85px;font-family:'Liberation Serif', serif;font-weight:normal;font-size:14.5px;color:#fbefef;letter-spacing:0.4px;-webkit-text-stroke:0.6px #fbefef">Cost</div>
<div class="t" style="left:177.62px;top:454.48px;font-family:'Liberation Sans', sans-serif;font-weight:normal;font-size:8.35px;color:#fff3f1">$14,723.9785</div>
<div class="t" style="left:275.32px;top:454.48px;font-family:'Liberation Sans', sans-serif;font-weight:normal;font-size:8.35px;color:#fff3f1">$14,023.6712</div>
<div class="t" style="left:357.02px;top:454.48px;font-family:'Liberation Sans', sans-serif;font-weight:normal;font-size:8.35px;color:#fff3f1">$10,055.3992</div>
<div class="t" style="left:461.92px;top:454.48px;font-family:'Liberation Sans', sans-serif;font-weight:normal;font-size:8.35px;color:#fff3f1">$23,346.5617</div>
<div class="t" style="left:552.32px;top:454.48px;font-family:'Liberation Sans', sans-serif;font-weight:normal;font-size:8.35px;color:#fff3f1">$19,832.8592</div>
<div class="t" style="left:631.22px;top:452.87px;font-family:'Liberation Sans', sans-serif;font-weight:bold;font-size:9.2px;color:#ffffff">$81,982.4698</div>
<div class="t" style="left:88.03px;top:487.29px;font-family:'Liberation Serif', serif;font-weight:normal;font-size:14.5px;color:#fbefef;letter-spacing:0.4px;-webkit-text-stroke:0.6px #fbefef">NA</div>
<div class="t" style="left:85.90px;top:520.53px;font-family:'Liberation Serif', serif;font-weight:normal;font-size:14.5px;color:#fbefef;letter-spacing:0.4px;-webkit-text-stroke:0.6px #fbefef">Sales</div>
<div class="t" style="left:186.91px;top:521.16px;font-family:'Liberation Sans', sans-serif;font-weight:normal;font-size:8.35px;color:#fff3f1">$82,679.45</div>
<div class="t" style="left:284.61px;top:521.16px;font-family:'Liberation Sans', sans-serif;font-weight:normal;font-size:8.35px;color:#fff3f1">$82,964.19</div>
<div class="t" style="left:366.31px;top:521.16px;font-family:'Liberation Sans', sans-serif;font-weight:normal;font-size:8.35px;color:#fff3f1">$46,862.19</div>
<div class="t" style="left:466.57px;top:521.16px;font-family:'Liberation Sans', sans-serif;font-weight:normal;font-size:8.35px;color:#fff3f1">$138,628.98</div>
<div class="t" style="left:556.97px;top:521.16px;font-family:'Liberation Sans', sans-serif;font-weight:normal;font-size:8.35px;color:#fff3f1">$103,981.88</div>
<div class="t" style="left:636.85px;top:519.55px;font-family:'Liberation Sans', sans-serif;font-weight:bold;font-size:9.2px;color:#ffffff">$435,116.69</div>
<div class="t" style="left:88.10px;top:553.74px;font-family:'Liberation Serif', serif;font-weight:normal;font-size:14.5px;color:#fbefef;letter-spacing:0.4px;-webkit-text-stroke:0.6px #fbefef">Cost</div>
<div class="t" style="left:177.62px;top:554.36px;font-family:'Liberation Sans', sans-serif;font-weight:normal;font-size:8.35px;color:#3e3a28">$23,442.2546</div>
<div class="t" style="left:275.32px;top:554.36px;font-family:'Liberation Sans', sans-serif;font-weight:normal;font-size:8.35px;color:#3e3a28">$31,028.7556</div>
<div class="t" style="left:361.67px;top:554.36px;font-family:'Liberation Sans', sans-serif;font-weight:normal;font-size:8.35px;color:#3e3a28">$17,526.576</div>
<div class="t" style="left:461.92px;top:554.36px;font-family:'Liberation Sans', sans-serif;font-weight:normal;font-size:8.35px;color:#3e3a28">$51,847.5049</div>
<div class="t" style="left:552.32px;top:554.36px;font-family:'Liberation Sans', sans-serif;font-weight:normal;font-size:8.35px;color:#3e3a28">$38,889.4309</div>
<div class="t" style="left:631.22px;top:552.75px;font-family:'Liberation Sans', sans-serif;font-weight:bold;font-size:9.2px;color:#ffffff">$162,734.522</div>
<div class="t" style="left:82.86px;top:578.10px;font-family:'Liberation Serif', serif;font-weight:bold;font-size:14.8px;color:#fbefef;letter-spacing:0.3px">Sales</div>
<div class="t" style="left:85.66px;top:611.10px;font-family:'Liberation Serif', serif;font-weight:bold;font-size:14.8px;color:#fbefef;letter-spacing:0.3px">Cost</div>
<div class="t" style="left:164.75px;top:580.07px;font-family:'Liberation Sans', sans-serif;font-weight:bold;font-size:9.2px;color:#ffffff">$4,684,786.643</div>
<div class="t" style="left:159.63px;top:611.57px;font-family:'Liberation Sans', sans-serif;font-weight:bold;font-size:9.2px;color:#ffffff">$2,774,350.4426</div>
<div class="t" style="left:257.33px;top:580.07px;font-family:'Liberation Sans', sans-serif;font-weight:bold;font-size:9.2px;color:#ffffff">$5,467,861.5445</div>
<div class="t" style="left:257.33px;top:611.57px;font-family:'Liberation Sans', sans-serif;font-weight:bold;font-size:9.2px;color:#ffffff">$3,207,526.6795</div>
<div class="t" style="left:339.03px;top:580.07px;font-family:'Liberation Sans', sans-serif;font-weight:bold;font-size:9.2px;color:#ffffff">$2,857,970.8932</div>
<div class="t" style="left:339.03px;top:611.57px;font-family:'Liberation Sans', sans-serif;font-weight:bold;font-size:9.2px;color:#ffffff">$1,687,950.4559</div>
<div class="t" style="left:444.44px;top:580.07px;font-family:'Liberation Sans', sans-serif;font-weight:bold;font-size:9.2px;color:#ffffff">$9,907,977.2811</div>
<div class="t" style="left:443.93px;top:611.57px;font-family:'Liberation Sans', sans-serif;font-weight:bold;font-size:9.2px;color:#ffffff">$5,808,408.8906</div>
<div class="t" style="left:534.33px;top:580.07px;font-family:'Liberation Sans', sans-serif;font-weight:bold;font-size:9.2px;color:#ffffff">$6,440,080.8589</div>
<div class="t" style="left:534.33px;top:611.57px;font-family:'Liberation Sans', sans-serif;font-weight:bold;font-size:9.2px;color:#ffffff">$3,799,557.1071</div>
<div class="t" style="left:613.32px;top:580.07px;font-family:'Liberation Sans', sans-serif;font-weight:bold;font-size:9.2px;color:#ffffff">$29,358,677.2207</div>
<div class="t" style="left:613.32px;top:611.57px;font-family:'Liberation Sans', sans-serif;font-weight:bold;font-size:9.2px;color:#ffffff">$17,277,793.5757</div>
<div class="ab" style="left:1003px;top:88px;width:196px;height:542px;background:#252525"></div>
<div class="ab" style="left:1169px;top:88px;width:1px;height:542px;background:#131313"></div>
<div class="ab" style="left:1170px;top:88px;width:29px;height:542px;background:#242424"></div>
<div class="t" style="left:1015.00px;top:103.72px;font-family:'Liberation Sans', sans-serif;font-weight:bold;font-size:12px;color:#f0f0f0">VISUALIZATIONS</div>
<svg class="ab" style="left:1149px;top:104px" width="8" height="12" viewBox="0 0 8 12"><path d="M1 1 L6 6 L1 11" fill="none" stroke="#cfcfcf" stroke-width="1.3"/></svg>
<svg class="ab" style="left:1181px;top:104px" width="8" height="12" viewBox="0 0 8 12"><path d="M7 1 L2 6 L7 11" fill="none" stroke="#cfcfcf" stroke-width="1.3"/></svg>
<div class='t' style="left:1177px;top:145px;font-family:'Liberation Sans', sans-serif;font-weight:bold;font-size:12px;color:#f0f0f0;transform-origin:0 0;transform:translate(14px,0) rotate(90deg)">FIELDS</div>
<div class="ab" style="left:1004px;top:132px;width:165px;height:114px;background:#3c3c3c"></div>
<svg class="ab" style="left:1012px;top:137px" width="18" height="17" viewBox="0 0 18 17"><path d="M0.5 0 V16.5 H18" fill="none" stroke="#8c8c8c" stroke-width="1"/><rect x="2" y="2" width="10" height="4" fill="#ef9a4e"/><rect x="2" y="9" width="14" height="4" fill="#e8c9a8"/></svg>
<svg class="ab" style="left:1038px;top:137px" width="18" height="17" viewBox="0 0 18 17"><path d="M0.5 0 V16.5 H18" fill="none" stroke="#8c8c8c" stroke-width="1"/><rect x="3" y="6" width="4" height="10" fill="#ef9a4e"/><rect x="9" y="2" width="4" height="14" fill="#f2b57a"/></svg>
<svg class="ab" style="left:1063px;top:137px" width="18" height="17" viewBox="0 0 18 17"><path d="M0.5 0 V16.5 H18" fill="none" stroke="#8c8c8c" stroke-width="1"/><rect x="2" y="1" width="10" height="3" fill="#e8c9a8"/><rect x="2" y="4" width="14" height="3" fill="#8fb8e0"/><rect x="2" y="9" width="12" height="3" fill="#e8c9a8"/><rect x="2" y="12" width="8" height="3" fill="#8fb8e0"/></svg>
<svg class="ab" style="left:1088px;top:137px" width="18" height="17" viewBox="0 0 18 17"><path d="M0.5 0 V16.5 H18" fill="none" stroke="#8c8c8c" stroke-width="1"/><rect x="2" y="7" width="3" height="9" fill="#f0c08a"/><rect x="5" y="1" width="3" height="15" fill="#8fb8e0"/><rect x="10" y="5" width="3" height="11" fill="#f0c08a"/><rect x="13" y="9" width="3" height="7" fill="#8fb8e0"/></svg>
<svg class="ab" style="left:1114px;top:137px" width="18" height="17" viewBox="0 0 18 17"><path d="M0.5 0 V16.5 H18" fill="none" stroke="#8c8c8c" stroke-width="1"/><rect x="2" y="2" width="8" height="4" fill="#8fb8e0"/><rect x="10" y="2" width="6" height="4" fill="#aaa"/><rect x="2" y="9" width="6" height="4" fill="#8fb8e0"/><rect x="8" y="9" width="8" height="4" fill="#aaa"/></svg>
<svg class="ab" style="left:1140px;top:137px" width="18" height="17" viewBox="0 0 18 17"><path d="M0.5 0 V16.5 H18" fill="none" stroke="#8c8c8c" stroke-width="1"/><rect x="3" y="1" width="5" height="15" fill="#8aa0b8"/><rect x="10" y="1" width="5" height="15" fill="#a8bed4"/></svg>
<svg class="ab" style="left:1012px;top:159px" width="18" height="17" viewBox="0 0 18 17"><path d="M0.5 0 V16.5 H18" fill="none" stroke="#8c8c8c" stroke-width="1"/><path d="M1 14 L8 5 L12 9 L16 6" fill="none" stroke="#bbb" stroke-width="1.2"/></svg>
<svg class="ab" style="left:1038px;top:159px" width="18" height="17" viewBox="0 0 18 17"><path d="M0 17 V6 L5 3 L10 8 L17 3 V17z" fill="#e8c9a8"/><path d="M8 17 V9 L12 6 L17 3 V17z" fill="#ef9a4e"/></svg>
<svg class="ab" style="left:1063px;top:159px" width="18" height="17" viewBox="0 0 18 17"><path d="M0 17 V5 L4 1 L8 5 L12 1 L17 5 V17z" fill="#f2b57a"/><path d="M0 13 V9 L5 11 L9 8 L13 11 L17 9 V13z" fill="#4f87c0"/></svg>
<svg class="ab" style="left:1088px;top:159px" width="18" height="17" viewBox="0 0 18 17"><path d="M0.5 0 V16.5 H18" fill="none" stroke="#8c8c8c" stroke-width="1"/><rect x="3" y="4" width="3" height="12" fill="#f0c08a"/><rect x="7" y="8" width="3" height="8" fill="#e8a868"/><rect x="11" y="6" width="3" height="10" fill="#f0c08a"/><rect x="14" y="1" width="2" height="15" fill="#8aa0b8"/></svg>
<svg class="ab" style="left:1114px;top:159px" width="18" height="17" viewBox="0 0 18 17"><path d="M0.5 0 V16.5 H18" fill="none" stroke="#8c8c8c" stroke-width="1"/><rect x="3" y="6" width="3" height="10" fill="#f0c08a"/><rect x="6" y="2" width="2" height="14" fill="#8fb8e0"/><rect x="10" y="4" width="3" height="12" fill="#f0c08a"/><rect x="13" y="7" width="2" height="9" fill="#8fb8e0"/></svg>
<svg class="ab" style="left:1140px;top:159px" width="18" height="17" viewBox="0 0 18 17"><rect x="1" y="6" width="4" height="11" fill="#f0c08a"/><rect x="6" y="4" width="4" height="13" fill="#e8a868"/><rect x="11" y="2" width="4" height="15" fill="#f0c08a"/></svg>
<svg class="ab" style="left:1012px;top:181px" width="18" height="17" viewBox="0 0 18 17"><path d="M0.5 0 V16.5 H18" fill="none" stroke="#8c8c8c" stroke-width="1"/><path d="M3 16 V3 H7 V12 H11 V3 H15 V16" fill="none" stroke="#d8d8d8" stroke-width="1.6"/></svg>
<svg class="ab" style="left:1038px;top:181px" width="18" height="17" viewBox="0 0 18 17"><path d="M0.5 0 V16.5 H18" fill="none" stroke="#8c8c8c" stroke-width="1"/><circle cx="4" cy="6" r="1.3" fill="#d88"/><circle cx="9" cy="4" r="1.3" fill="#6aa"/><circle cx="7" cy="10" r="1.3" fill="#fff"/><circle cx="12" cy="9" r="1.3" fill="#6aa"/><circle cx="14" cy="13" r="1.3" fill="#6aa"/><circle cx="3" cy="12" r="1.3" fill="#6aa"/></svg>
<svg class="ab" style="left:1063px;top:181px" width="18" height="17" viewBox="0 0 18 17"><circle cx="9" cy="9" r="8" fill="#8fb8e0"/><path d="M9 9 L9 1 A8 8 0 0 0 1.5 6 z" fill="#f5d0a8"/><path d="M9 9 L1.5 6 A8 8 0 0 0 4 15 z" fill="#f0c08a"/></svg>
<svg class="ab" style="left:1088px;top:181px" width="18" height="17" viewBox="0 0 18 17"><circle cx="9" cy="9" r="6.5" fill="none" stroke="#4f87c0" stroke-width="3.2"/><path d="M9 2.5 A6.5 6.5 0 0 1 15 7" fill="none" stroke="#f5d0a8" stroke-width="3.2"/></svg>
<svg class="ab" style="left:1114px;top:181px" width="18" height="17" viewBox="0 0 18 17"><rect x="1" y="1" width="16" height="15" fill="#e8e8e8"/><path d="M1 6h16M1 10h16M9 1v15M5 10v6" stroke="#666" stroke-width="1"/></svg>
<svg class="ab" style="left:1140px;top:181px" width="18" height="17" viewBox="0 0 18 17"><circle cx="9" cy="9" r="7.5" fill="#dce8f4"/><path d="M1.5 9h15M9 1.5v15M3 5h12M3 13h12" stroke="#6a9ac8" stroke-width="0.9"/><ellipse cx="9" cy="9" rx="3.5" ry="7.5" fill="none" stroke="#6a9ac8" stroke-width="0.9"/></svg>
<svg class="ab" style="left:1012px;top:202px" width="18" height="17" viewBox="0 0 18 17"><path d="M1 2 H16 L14 8 L16 13 L10 16 L3 13 L1 8z" fill="#4f87c0"/><path d="M1 2 H10 V7 H1z M10 9 H16 V13 H10z" fill="#f0f0f0"/></svg>
<svg class="ab" style="left:1038px;top:202px" width="18" height="17" viewBox="0 0 18 17"><rect x="1" y="2" width="16" height="3" fill="#8fb8e0"/><rect x="3" y="6" width="12" height="3" fill="#f0c08a"/><rect x="5" y="10" width="8" height="3" fill="#8fb8e0"/><rect x="7" y="14" width="4" height="2" fill="#f0c08a"/></svg>
<svg class="ab" style="left:1063px;top:202px" width="18" height="17" viewBox="0 0 18 17"><path d="M2 15 A7 7 0 0 1 16 15" fill="none" stroke="#e8c9a8" stroke-width="3.5"/><path d="M12 8.5 A7 7 0 0 1 16 15" fill="none" stroke="#8fb8a8" stroke-width="3.5"/></svg>
<svg class="ab" style="left:1088px;top:202px" width="18" height="17" viewBox="0 0 18 17"><rect x="0.5" y="2" width="17" height="14" fill="#f0f0f0"/><text x="9" y="12" font-family="Liberation Serif" font-size="9" fill="#4f6f9f" text-anchor="middle">123</text></svg>
<svg class="ab" style="left:1114px;top:202px" width="18" height="17" viewBox="0 0 18 17"><rect x="1" y="0.5" width="15" height="16" fill="#f0f0f0"/><path d="M3 3v12" stroke="#999" stroke-width="1.2"/><path d="M5 4h4M5 7h6" stroke="#4f87c0" stroke-width="1"/></svg>
<svg class="ab" style="left:1140px;top:202px" width="18" height="17" viewBox="0 0 18 17"><rect x="0.5" y="3" width="17" height="11" fill="#f0f0f0"/><path d="M5 6 L7 9 L9 6z M10 9 L12 6 L14 9z" fill="#d04a3a"/><path d="M3 11h12" stroke="#999"/></svg>
<svg class="ab" style="left:1012px;top:224px" width="18" height="17" viewBox="0 0 18 17"><rect x="0.5" y="1" width="15" height="16" fill="#f0f0f0"/><rect x="0.5" y="1" width="15" height="3" fill="#4f87c0"/><path d="M8 9 H18 L14 13 V17 L12 17 V13z" fill="#8c8c8c"/><path d="M3 7h4M3 10h3" stroke="#d0804a"/></svg>
<svg class="ab" style="left:1038px;top:224px" width="18" height="17" viewBox="0 0 18 17"><rect x="1" y="1" width="16" height="16" fill="#f4f4f4"/><path d="M1 6h16M1 11.5h16M6.5 1v16M12 1v16" stroke="#666" stroke-width="1.2"/></svg>
<svg class="ab" style="left:1063px;top:224px" width="18" height="17" viewBox="0 0 18 17"></svg>
<svg class="ab" style="left:1088px;top:224px" width="18" height="17" viewBox="0 0 18 17"><text x="8.5" y="17" font-family="Liberation Sans" font-weight="bold" font-size="20" fill="#8fb0d8" text-anchor="middle">R</text></svg>
<svg class="ab" style="left:1114px;top:224px" width="18" height="17" viewBox="0 0 18 17"><circle cx="5" cy="8" r="1.3" fill="#e6e6e6"/><circle cx="10" cy="8" r="1.3" fill="#e6e6e6"/><circle cx="15" cy="8" r="1.3" fill="#e6e6e6"/></svg>
<svg class="ab" style="left:1061px;top:222px" width="21" height="21" viewBox="0 0 21 21"><rect x="1" y="1" width="19" height="19" fill="none" stroke="#e6d36a" stroke-width="2"/><rect x="4" y="4" width="13" height="13" fill="#6e6e6e"/><path d="M4 10.5h13M10.5 4v13" stroke="#555" stroke-width="1"/></svg>
<div class="ab" style="left:1004px;top:246px;width:165px;height:34px;background:#252525"></div>
<svg class="ab" style="left:1021px;top:252px" width="21" height="20" viewBox="0 0 21 20"><path d="M1 1.5h19" stroke="#ddd" stroke-width="1.2"/><rect x="1.5" y="5" width="18" height="6" fill="none" stroke="#ddd" stroke-width="1.2" stroke-dasharray="2 1.3"/><rect x="1.5" y="12.5" width="18" height="6" fill="none" stroke="#ddd" stroke-width="1.2" stroke-dasharray="2 1.3"/></svg>
<svg class="ab" style="left:1058px;top:252px" width="20" height="21" viewBox="0 0 20 21"><rect x="1" y="1" width="16" height="5" rx="1.5" fill="none" stroke="#e6e6e6" stroke-width="1.4"/><path d="M17 3.5h1.5v5H9v3" fill="none" stroke="#e6e6e6" stroke-width="1.4"/><rect x="7" y="11.5" width="4" height="8" rx="1" fill="none" stroke="#e6e6e6" stroke-width="1.4"/></svg>
<svg class="ab" style="left:1094px;top:252px" width="22" height="22" viewBox="0 0 22 22"><circle cx="9" cy="9" r="7.5" fill="none" stroke="#ddd" stroke-width="1.4"/><path d="M2 10 L6 7 L9 9 L15 5" fill="none" stroke="#ddd" stroke-width="1.2"/><path d="M5 10v5M8 10v6M11 9v6M14 8v5" stroke="#ddd" stroke-width="1"/><path d="M14.5 14.5 L20 20" stroke="#ddd" stroke-width="1.6"/></svg>
<div class="ab" style="left:1051px;top:276px;width:34px;height:2.5px;background:#e9d068"></div>
<div class="ab" style="left:1004px;top:280px;width:165px;height:350px;background:#3e3e3e"></div>
<div class="ab" style="left:1008px;top:282px;width:157px;height:28px;background:#1e1e1e"></div>
<div class="ab" style="left:1008px;top:282px;width:157px;height:28px;background:transparent;border:1px solid #2b2b2b"></div>
<svg class="ab" style="left:1017px;top:288px" width="16" height="16" viewBox="0 0 16 16"><circle cx="10" cy="6" r="4.6" fill="none" stroke="#bdbdbd" stroke-width="1.2"/><path d="M6.8 9.2 L1.5 14.5" stroke="#bdbdbd" stroke-width="1.3"/></svg>
<div class="t" style="left:1040.00px;top:291.46px;font-family:'Liberation Sans', sans-serif;font-weight:normal;font-size:11.5px;color:#bcbcbc">Search</div>
<div class="ab" style="left:1115px;top:315px;width:40px;height:2px;background:#2a2a2a"></div>
<div class="t" style="left:1012.00px;top:334.70px;font-family:'Liberation Sans', sans-serif;font-weight:normal;font-size:11px;color:#ebebeb">Banded r...</div>
<div class="t" style="left:1096.00px;top:334.70px;font-family:'Liberation Sans', sans-serif;font-weight:normal;font-size:11px;color:#ebebeb">Off</div>
<svg class="ab" style="left:1123px;top:332px" width="30" height="16" viewBox="0 0 30 16"><circle cx="8" cy="8" r="6" fill="none" stroke="#fff" stroke-width="2"/><path d="M14 8h14" stroke="#fff" stroke-width="2"/></svg>
<div class="t" style="left:1012.00px;top:367.70px;font-family:'Liberation Sans', sans-serif;font-weight:normal;font-size:11px;color:#ebebeb">Show on...</div>
<div class="t" style="left:1096.00px;top:367.70px;font-family:'Liberation Sans', sans-serif;font-weight:normal;font-size:11px;color:#ebebeb">On</div>
<svg class="ab" style="left:1122px;top:365px" width="30" height="16" viewBox="0 0 30 16"><path d="M2 8h14" stroke="#fff" stroke-width="2"/><circle cx="22" cy="8" r="7" fill="#fff"/></svg>
<div class="ab" style="left:1004px;top:355px;width:166px;height:34px;border:3px solid #ece31e"></div>
<div class="t" style="left:1012.00px;top:400.70px;font-family:'Liberation Sans', sans-serif;font-weight:normal;font-size:11px;color:#ebebeb">Outline</div>
<div class="ab" style="left:1075px;top:396px;width:81px;height:21px;background:#5c5c5c;border:1px solid #333"></div>
<div class="t" style="left:1079.00px;top:400.70px;font-family:'Liberation Sans', sans-serif;font-weight:normal;font-size:11px;color:#f0f0f0">None</div>
<svg class="ab" style="left:1143px;top:404px" width="8" height="5" viewBox="0 0 8 5"><path d="M0.5 0.5h6l-3 3z" fill="#bbb"/></svg>
<div class="t" style="left:1012.00px;top:433.70px;font-family:'Liberation Sans', sans-serif;font-weight:normal;font-size:11px;color:#ebebeb">URL icon</div>
<div class="t" style="left:1096.00px;top:433.70px;font-family:'Liberation Sans', sans-serif;font-weight:normal;font-size:11px;color:#ebebeb">Off</div>
<svg class="ab" style="left:1123px;top:432px" width="30" height="16" viewBox="0 0 30 16"><circle cx="8" cy="8" r="6" fill="none" stroke="#fff" stroke-width="2"/><path d="M14 8h14" stroke="#fff" stroke-width="2"/></svg>
<div class="t" style="left:1012.00px;top:466.70px;font-family:'Liberation Sans', sans-serif;font-weight:normal;font-size:11px;color:#ebebeb">Word wr...</div>
<div class="t" style="left:1096.00px;top:466.70px;font-family:'Liberation Sans', sans-serif;font-weight:normal;font-size:11px;color:#ebebeb">On</div>
<svg class="ab" style="left:1123px;top:465px" width="30" height="16" viewBox="0 0 30 16"><path d="M2 8h14" stroke="#fff" stroke-width="2"/><circle cx="22" cy="8" r="7" fill="#fff"/></svg>
<div class="t" style="left:1012.00px;top:499.70px;font-family:'Liberation Sans', sans-serif;font-weight:normal;font-size:11px;color:#ebebeb">Font fam...</div>
<div class="ab" style="left:1075px;top:495px;width:81px;height:21px;background:#5c5c5c;border:1px solid #333"></div>
<div class="t" style="left:1079.00px;top:499.70px;font-family:'Liberation Sans', sans-serif;font-weight:normal;font-size:11px;color:#f0f0f0">Segoe UI</div>
<svg class="ab" style="left:1143px;top:503px" width="8" height="5" viewBox="0 0 8 5"><path d="M0.5 0.5h6l-3 3z" fill="#bbb"/></svg>
<div class="t" style="left:1012.00px;top:532.70px;font-family:'Liberation Sans', sans-serif;font-weight:normal;font-size:11px;color:#ebebeb">Text size</div>
<div class="ab" style="left:1099px;top:527px;width:57px;height:21px;background:#5a5a5a"></div>
<div class="ab" style="left:1099px;top:527px;width:57px;height:1px;background:#2f2f2f"></div>
<div class="t" style="left:1109.94px;top:531.70px;font-family:'Liberation Sans', sans-serif;font-weight:normal;font-size:11px;color:#f0f0f0">9</div>
<svg class="ab" style="left:1139px;top:530px" width="12" height="16" viewBox="0 0 12 16"><path d="M1.5 6 L6 1.5 L10.5 6z M1.5 10 L6 14.5 L10.5 10z" fill="#cfcfcf"/></svg>
<div class="t" style="left:1012.00px;top:569.70px;font-family:'Liberation Sans', sans-serif;font-weight:normal;font-size:11px;color:#e6b34a">Revert to default</div>
<div class="ab" style="left:1004px;top:590px;width:165px;height:1px;background:#333"></div>
<svg class="ab" style="left:1012px;top:602px" width="14" height="9" viewBox="0 0 14 9"><path d="M1.5 1 L7 6.5 L12.5 1" fill="none" stroke="#d6d6d6" stroke-width="1.1"/></svg>
<div class="t" style="left:1028.00px;top:601.70px;font-family:'Liberation Sans', sans-serif;font-weight:normal;font-size:11px;color:#ebebeb">Subtotals</div>
<div class="ab" style="left:1004px;top:621px;width:165px;height:1px;background:#333"></div>
<div class="ab" style="left:1163px;top:449px;width:6px;height:150px;background:#707070;border-radius:3px"></div>
</body></html>
